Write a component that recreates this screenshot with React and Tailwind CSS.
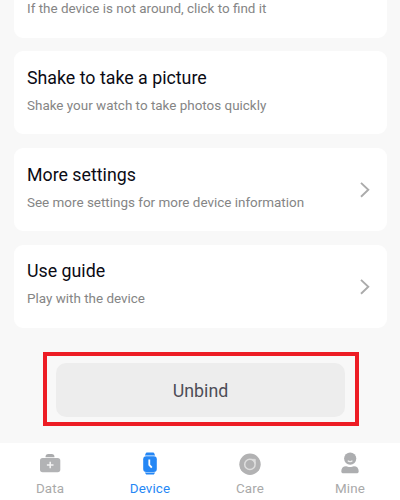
function Chevron() {
  return (
    <svg className="mt-[1.6px] mr-[16px] h-[16px] w-[12px] shrink-0" viewBox="0 0 12 16" fill="none" stroke="#ababab" strokeWidth="1.9">
      <path d="M2 .9 9.3 7.8 2 14.7" />
    </svg>
  );
}

function Card({ title, text, arrow }) {
  return (
    <section className="flex h-[83px] shrink-0 items-center justify-between rounded-[9px] bg-white pl-[13px]">
      <div className="h-full whitespace-nowrap pt-[13.8px]">
        <h2 className="text-[17.8px] leading-[25px] text-[#0b0b14]">{title}</h2>
        <p className="mt-[6px] text-[13.45px] leading-5 text-[#858585]">{text}</p>
      </div>
      {arrow && <Chevron />}
    </section>
  );
}

function DataIcon() {
  return (
    <svg className="h-6 w-6" viewBox="0 0 24 24">
      <path d="M7.5 6.3C7.5 4 8.5 3 10.3 3h3.4c1.8 0 2.8 1 2.8 3.3z" fill="#aaabad" />
      <rect x="2" y="6.9" width="20.3" height="14.3" rx="2.6" fill="#b2b3b5" />
      <path d="M12.2 10.7v6.6M8.9 14h6.6" stroke="#f4f4f4" strokeWidth="1.5" />
    </svg>
  );
}

function DeviceIcon() {
  return (
    <svg className="h-6 w-6" viewBox="0 0 24 24" fill="#2587f5">
      <path d="M6.9 4.6 7.8 2.3c.2-.5.5-.7 1-.7h6.4c.5 0 .8.2 1 .7l.9 2.3zM6.9 21.5l.9 1.4c.2.5.5.7 1 .7h6.4c.5 0 .8-.2 1-.7l.9-1.4z" />
      <rect x="5.2" y="5.3" width="13.6" height="15.6" rx="3" />
      <path d="M11.3 8.4v5.5l2.5 2.8" fill="none" stroke="#fff" strokeWidth="1.8" />
    </svg>
  );
}

function CareIcon() {
  return (
    <svg className="h-6 w-6" viewBox="0 0 24 24">
      <circle cx="12" cy="13.2" r="10.7" fill="#b2b2b3" />
      <circle cx="11.9" cy="13.4" r="5.2" fill="none" stroke="#dedede" strokeWidth="1.5" />
      <path d="M13.2 8.3h4.1v4.3c-.3-2.2-1.9-3.8-4.1-4.3z" fill="#dedede" stroke="#dedede" strokeWidth=".7" />
    </svg>
  );
}

function MineIcon() {
  return (
    <svg className="h-6 w-6" viewBox="0 0 24 24" fill="#adaeb0">
      <circle cx="12.2" cy="7.6" r="6.1" />
      <path d="M3.3 20.3c0-3.1 1.8-5 4.8-5 1.4 0 2.1.8 3.9.8s2.5-.8 3.9-.8c3 0 4.8 1.9 4.8 5 0 1.4-.8 2-2.2 2h-13c-1.4 0-2.2-.6-2.2-2z" />
      <path d="M9.8 9.6c1 1.4 3.6 1.4 4.6 0" fill="none" stroke="#eee" strokeWidth="1.2" />
    </svg>
  );
}

function Tab({ icon, label, active }) {
  return (
    <div className="flex flex-1 flex-col items-center pt-[8px]">
      {icon}
      <span className={"mt-[5px] text-[13.4px] leading-[17px] tracking-[0.1px] " + (active ? "text-[#2587f5]" : "text-[#a9a9a9]")}>
        {label}
      </span>
    </div>
  );
}

export default function App() {
  return (
    <div className="flex h-[500px] w-[400px] flex-col overflow-hidden bg-[#f8f8f8] font-[Roboto,sans-serif]">
      <main className="flex h-[443px] shrink-0 flex-col pr-[13px] pl-[14px]">
        <section className="h-[38px] shrink-0 rounded-b-[9px] bg-white pl-[13px]">
          <p className="-mt-[1px] text-[13.45px] leading-5 text-[#858585]">If the device is not around, click to find it</p>
        </section>
        <div className="mt-[13px] flex flex-col gap-[13.8px]">
          <Card title="Shake to take a picture" text="Shake your watch to take photos quickly" />
          <Card title="More settings" text="See more settings for more device information" arrow />
          <Card title="Use guide" text="Play with the device" arrow />
        </div>
        <div className="mt-[24.4px] ml-[29px] flex h-[74px] w-[316px] shrink-0 border-4 border-[#ed1c24] pt-[7px] pr-[10px] pb-[5px] pl-[9px]">
          <button className="h-[54px] w-full rounded-[10px] bg-[#ededed] pt-[2px] text-[17.8px] text-[#4d4d57]">Unbind</button>
        </div>
      </main>
      <nav className="flex h-[57px] shrink-0 bg-white">
        <Tab icon={<DataIcon />} label="Data" />
        <Tab icon={<DeviceIcon />} label="Device" active />
        <Tab icon={<CareIcon />} label="Care" />
        <Tab icon={<MineIcon />} label="Mine" />
      </nav>
    </div>
  );
}
